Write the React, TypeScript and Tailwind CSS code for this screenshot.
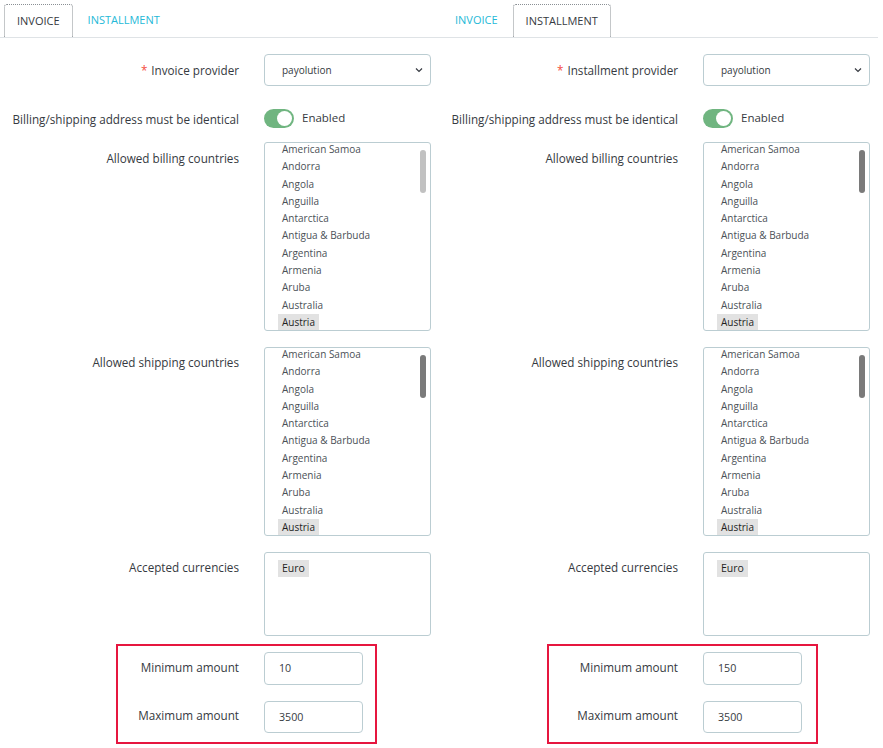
import React from 'react'

const countries = [
  'American Samoa',
  'Andorra',
  'Angola',
  'Anguilla',
  'Antarctica',
  'Antigua & Barbuda',
  'Argentina',
  'Armenia',
  'Aruba',
  'Australia',
  'Austria',
]

interface PanelProps {
  active: 'invoice' | 'installment'
  provider: string
  min: string
  max: string
  billingThumb: string
  redBox: string
}

function Tabs({ active }: { active: 'invoice' | 'installment' }) {
  const tab = (key: 'invoice' | 'installment', label: string) =>
    active === key ? (
      <div className="flex h-[33px] items-center rounded-t-[3px] border border-b-0 border-dotted border-[#8a8f94] bg-white px-[12px] text-[#363a41]">
        {label}
      </div>
    ) : (
      <div className="flex h-[33px] items-center px-[12px] text-[#25b9d7]">{label}</div>
    )
  return (
    <div className="flex h-[38px] items-end gap-[3px] border-b border-[#dfe3e6] pl-[4px] text-[11px]">
      {tab('invoice', 'INVOICE')}
      {tab('installment', 'INSTALLMENT')}
    </div>
  )
}

function Label({ children, required }: { children: React.ReactNode; required?: boolean }) {
  return (
    <div className="w-[239px] shrink-0 whitespace-nowrap text-right text-[11.7px] leading-[18px] text-[#363a41]">
      {required && <span className="mr-[4px] text-[#f54c3e]">*</span>}
      {children}
    </div>
  )
}

function ListBox({ thumb }: { thumb: string }) {
  return (
    <div className="relative h-[189px] w-[167px] overflow-hidden rounded-[3px] border border-[#bbcdd2] bg-white">
      <div className="-mt-[2px] px-[17px] text-[10px] text-[#4b5157]">
        {countries.map((c) => (
          <div key={c} className="h-[17.3px] leading-[17.3px]">
            {c === 'Austria' ? <span className="-ml-[4px] inline-block bg-[#e2e2e2] px-[4px] text-[#1f1f1f]">{c}</span> : c}
          </div>
        ))}
      </div>
      <div className={`absolute right-[4px] top-[7px] h-[43px] w-[6px] rounded-full ${thumb}`} />
    </div>
  )
}

function Panel({ active, provider, min, max, billingThumb, redBox }: PanelProps) {
  return (
    <div className="w-[439px] shrink-0">
      <Tabs active={active} />
      <div className="pt-[16px]">
        <div className="flex items-start gap-[25px]">
          <div className="pt-[7px]">
            <Label required>{provider}</Label>
          </div>
          <div className="flex h-[32px] w-[167px] items-center justify-between rounded-[4px] border border-[#bbcdd2] bg-white pl-[17px] pr-[7px] text-[10px] text-[#363a41]">
            <span>payolution</span>
            <svg width="8" height="6" viewBox="0 0 8 6" fill="none" stroke="#363a41" strokeWidth="1.2">
              <path d="M1 1.5l3 3 3-3" />
            </svg>
          </div>
        </div>

        <div className="mt-[23px] flex items-center gap-[25px]">
          <Label>Billing/shipping address must be identical</Label>
          <div className="flex items-center gap-[8px]">
            <div className="flex h-[19px] w-[30px] items-center justify-end rounded-full bg-[#70b580] pr-[2px]">
              <div className="h-[15px] w-[15px] rounded-full bg-white" />
            </div>
            <span className="-mt-[1px] text-[11.5px] text-[#363a41]">Enabled</span>
          </div>
        </div>

        <div className="mt-[14px] flex items-start gap-[25px]">
          <div className="pt-[7px]">
            <Label>Allowed billing countries</Label>
          </div>
          <ListBox thumb={billingThumb} />
        </div>

        <div className="mt-[16px] flex items-start gap-[25px]">
          <div className="pt-[6px]">
            <Label>Allowed shipping countries</Label>
          </div>
          <ListBox thumb="bg-[#7a7a7a]" />
        </div>

        <div className="mt-[16px] flex items-start gap-[25px]">
          <div className="pt-[6px]">
            <Label>Accepted currencies</Label>
          </div>
          <div className="h-[84px] w-[167px] rounded-[3px] border border-[#bbcdd2] bg-white px-[17px] pt-[7px] text-[10.5px]">
            <span className="-ml-[4px] inline-block bg-[#e2e2e2] px-[4px] leading-[17px] text-[#1f1f1f]">Euro</span>
          </div>
        </div>

        <div className="relative mt-[8px] pb-[11px] pt-[8px]">
          <div className={`pointer-events-none absolute top-0 bottom-0 border-2 border-[#e6163f] ${redBox}`} />
          <div className="flex items-start gap-[25px]">
            <div className="pt-[6px]">
              <Label>Minimum amount</Label>
            </div>
            <div className="flex h-[33px] w-[99px] items-center rounded-[4px] border border-[#bbcdd2] bg-white pl-[14px] text-[10.7px] text-[#363a41]">
              {min}
            </div>
          </div>
          <div className="mt-[16px] flex items-start gap-[25px]">
            <div className="pt-[5px]">
              <Label>Maximum amount</Label>
            </div>
            <div className="flex h-[32px] w-[99px] items-center rounded-[4px] border border-[#bbcdd2] bg-white pl-[14px] text-[10.7px] text-[#363a41]">
              {max}
            </div>
          </div>
        </div>
      </div>
    </div>
  )
}

export default function App() {
  return (
    <div className="h-[748px] w-[883px] overflow-hidden bg-white font-['Open_Sans',sans-serif]">
      <div className="flex">
        <Panel
          active="invoice"
          provider="Invoice provider"
          min="10"
          max="3500"
          billingThumb="bg-[#c1c1c1]"
          redBox="left-[116px] w-[261px]"
        />
        <Panel
          active="installment"
          provider="Installment provider"
          min="150"
          max="3500"
          billingThumb="bg-[#7a7a7a]"
          redBox="left-[108px] w-[271px]"
        />
      </div>
    </div>
  )
}
